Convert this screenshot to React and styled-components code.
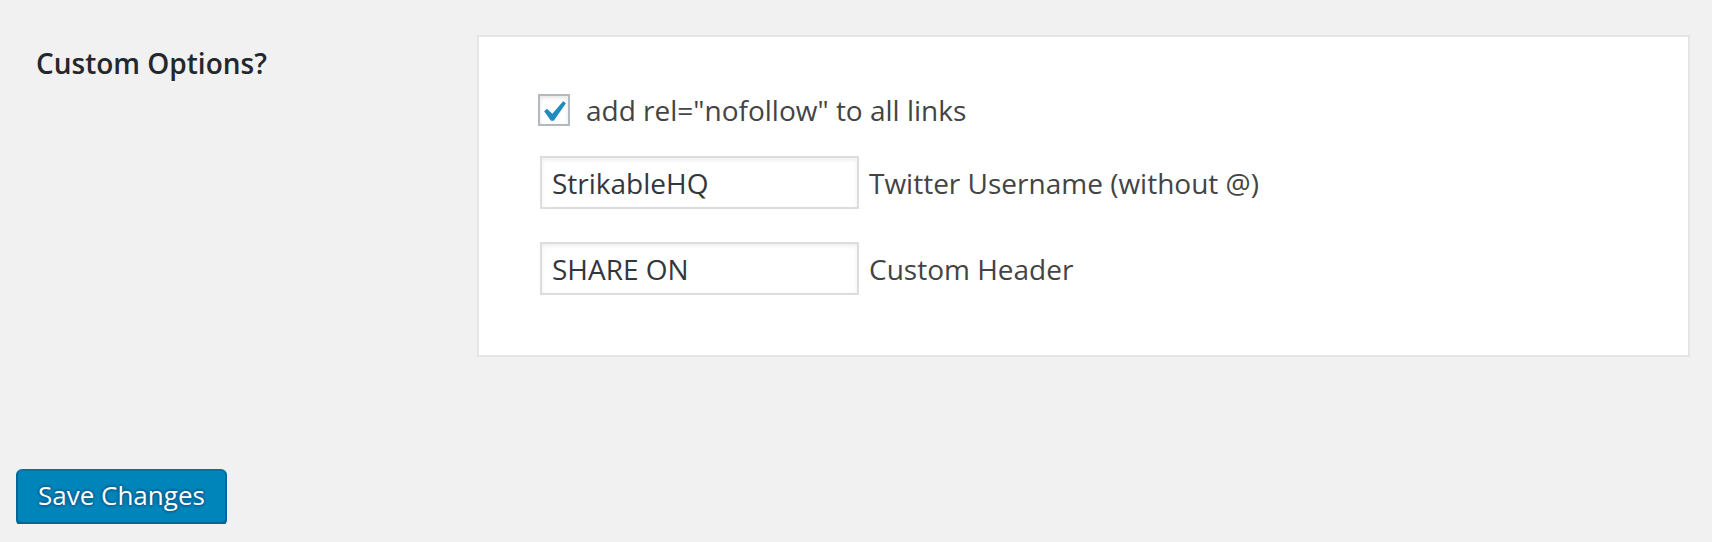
import React from 'react';
import styled, { createGlobalStyle } from 'styled-components';

const GlobalStyle = createGlobalStyle`
  html, body {
    margin: 0;
    background: #f1f1f1;
  }
  body {
    font-family: "Open Sans", "Liberation Sans", sans-serif;
    color: #444;
  }
`;

const Wrap = styled.div`
  padding: 35px 22px 0 16px;
`;

const FormRow = styled.div`
  display: grid;
  grid-template-columns: 461px 1fr;
`;

const RowLabel = styled.div`
  padding: 9px 0 0 20px;
  font-size: 28px;
  line-height: 38px;
  font-weight: 600;
  color: #23282d;
`;

const Panel = styled.div`
  background: #fff;
  border: 2px solid #e5e5e5;
  padding: 54px 20px 60px 59px;
  display: flex;
  flex-direction: column;
`;

const CheckRow = styled.label`
  display: flex;
  align-items: center;
  height: 38px;
  margin-bottom: 27px;
  font-size: 28px;
  line-height: 38px;
  color: #444;
`;

const CheckBox = styled.span`
  position: relative;
  flex: none;
  width: 32px;
  height: 32px;
  box-sizing: border-box;
  border: 2px solid #b4b9be;
  background: #fff;
  box-shadow: inset 0 2px 4px rgba(0, 0, 0, 0.1);
  margin-right: 16px;
`;

const Tick = styled.svg`
  position: absolute;
  left: -8px;
  top: -5px;
  width: 42px;
  height: 42px;
`;

const InputRow = styled.div`
  display: flex;
  align-items: center;
  margin-left: 2px;
  margin-bottom: ${p => (p.$last ? 0 : 33)}px;
`;

const TextInput = styled.input`
  box-sizing: border-box;
  width: 319px;
  height: 53px;
  margin: 0;
  padding: 0 10px;
  border: 2px solid #ddd;
  box-shadow: inset 0 2px 4px rgba(0, 0, 0, 0.07);
  background: #fff;
  font-family: inherit;
  font-size: 28px;
  line-height: 38px;
  color: #32373c;
  outline: none;
`;

const Hint = styled.span`
  margin-left: 10px;
  font-size: 28px;
  line-height: 38px;
  color: #444;
`;

const Footer = styled.div`
  display: flex;
  padding-top: 112px;
`;

const PrimaryButton = styled.button`
  box-sizing: border-box;
  height: 55px;
  padding: 0 20px 2px;
  border: 2px solid;
  border-color: #0073aa #006799 #006799;
  border-radius: 6px;
  background: #0085ba;
  box-shadow: 0 2px 0 #006799;
  color: #fff;
  font-family: inherit;
  font-size: 26px;
  line-height: 49px;
  text-shadow: 0 -2px 2px #006799, 2px 0 2px #006799, 0 2px 2px #006799,
    -2px 0 2px #006799;
  cursor: pointer;
`;

export default function App() {
  return (
    <>
      <GlobalStyle />
      <Wrap>
        <FormRow>
          <RowLabel>Custom Options?</RowLabel>
          <Panel>
            <CheckRow>
              <CheckBox>
                <Tick viewBox="0 0 20 20">
                  <path
                    fill="#1e8cbe"
                    d="M14.83 4.89l1.34.94-5.81 8.38H9.02L5.78 9.67l1.34-1.25 2.57 2.4z"
                  />
                </Tick>
              </CheckBox>
              add rel="nofollow" to all links
            </CheckRow>
            <InputRow>
              <TextInput defaultValue="StrikableHQ" />
              <Hint>Twitter Username (without @)</Hint>
            </InputRow>
            <InputRow $last>
              <TextInput defaultValue="SHARE ON" />
              <Hint>Custom Header</Hint>
            </InputRow>
          </Panel>
        </FormRow>
        <Footer>
          <PrimaryButton>Save Changes</PrimaryButton>
        </Footer>
      </Wrap>
    </>
  );
}
